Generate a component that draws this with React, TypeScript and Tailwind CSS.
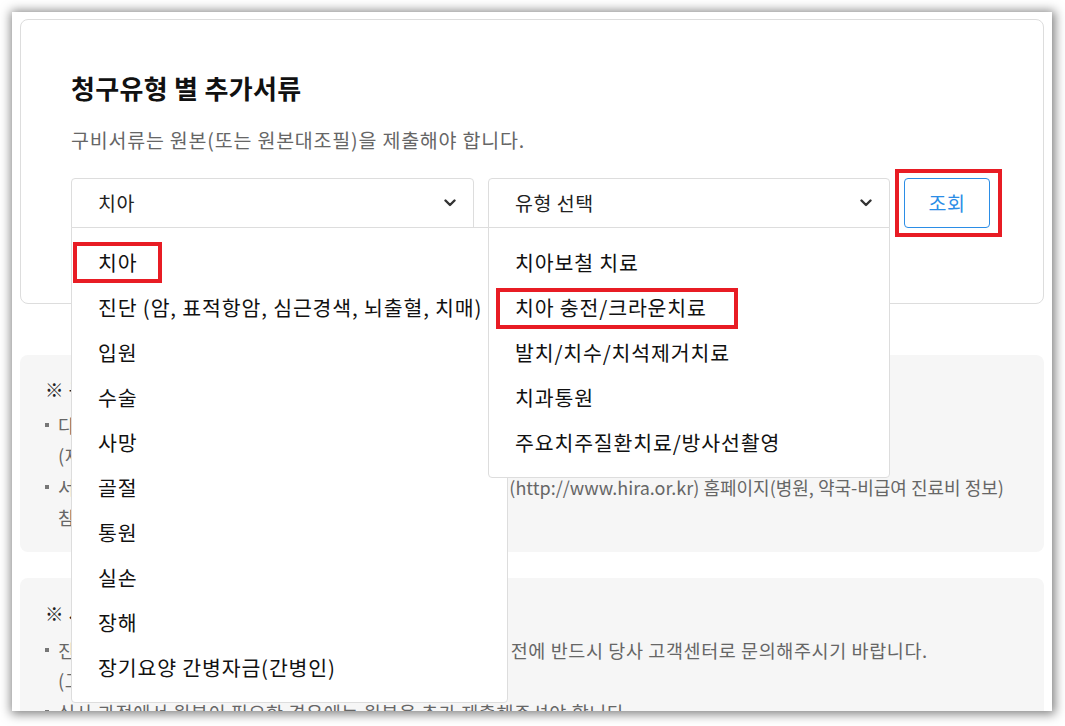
import React from "react";

const typeOptions = [
    "치아",
    "진단 (암, 표적항암, 심근경색, 뇌출혈, 치매)",
    "입원",
    "수술",
    "사망",
    "골절",
    "통원",
    "실손",
    "장해",
    "장기요양 간병자금(간병인)"
];

const detailOptions = [
    "치아보철 치료",
    "치아 충전/크라운치료",
    "발치/치수/치석제거치료",
    "치과통원",
    "주요치주질환치료/방사선촬영"
];

function Chevron() {
    return <svg width="12" height="8" viewBox="0 0 12 8" className="shrink-0">
        <path d="M1.5 1.5 L6 6 L10.5 1.5" fill="none" stroke="#333" strokeWidth="2.4" strokeLinecap="round" strokeLinejoin="round" />
    </svg>
}

function Bullet({ children }: { children: React.ReactNode }) {
    return <li className="flex">
        <span className="flex h-[30px] w-[13px] shrink-0 items-center">
            <span className="h-[4px] w-[4px] bg-[#777]" />
        </span>
        <span className="whitespace-nowrap">{children}</span>
    </li>
}

export default function App() {
    return <div className="h-[726px] w-[1065px] overflow-hidden bg-white pl-[12px] pt-[12px] font-['Noto_Sans_CJK_KR','Noto_Sans',sans-serif]">
        <div className="h-[699px] w-[1040px] overflow-hidden bg-white px-[8px] pt-[7px] shadow-[1px_1px_10px_2px_rgba(0,0,0,0.5)]">
            {/* search card */}
            <div className="rounded-[8px] border border-[#dddddd] px-[50px] pb-[75px] pt-[49px]">
                <h2 className="h-[38px] text-[26px] font-bold leading-[38px] tracking-[0.3px] text-[#111]">청구유형 별 추가서류</h2>
                <p className="mt-[19px] text-[19.5px] leading-[28px] tracking-[0.8px] text-[#666]">구비서류는 원본(또는 원본대조필)을 제출해야 합니다.</p>
                <div className="mt-[24px] flex gap-[14px]">
                    <div className="relative h-[50px] w-[403px]">
                        <div className="flex h-full items-center justify-between rounded-t-[4px] border border-[#dddddd] bg-white pl-[26px] pr-[17px] text-[19.5px] tracking-[0.5px] text-[#222]">
                            <span>치아</span>
                            <Chevron />
                        </div>
                        <ul className="absolute left-0 top-[49px] z-10 w-[437px] rounded-b-[4px] border border-[#dddddd] bg-white py-[12px]">
                            {typeOptions.map((o) => (
                                <li key={o} className="h-[45px] whitespace-nowrap pl-[26px] text-[20.5px] leading-[45px] tracking-[0.85px] text-[#111]">{o}</li>
                            ))}
                        </ul>
                        <span className="absolute left-[2px] top-[64px] z-30 h-[41px] w-[89px] border-4 border-[#e81c24]" />
                    </div>
                    <div className="relative h-[50px] w-[402px]">
                        <div className="flex h-full items-center justify-between rounded-t-[4px] border border-[#dddddd] bg-white pl-[26px] pr-[17px] text-[19.5px] tracking-[0.5px] text-[#222]">
                            <span>유형 선택</span>
                            <Chevron />
                        </div>
                        <ul className="absolute left-0 top-[49px] z-20 w-full rounded-b-[4px] border border-[#dddddd] bg-white py-[12px]">
                            {detailOptions.map((o) => (
                                <li key={o} className="h-[45px] whitespace-nowrap pl-[26px] text-[20.5px] leading-[45px] tracking-[0.85px] text-[#111]">{o}</li>
                            ))}
                        </ul>
                        <span className="absolute left-[8px] top-[110px] z-30 h-[41px] w-[242px] border-4 border-[#e81c24]" />
                    </div>
                    <div className="relative">
                        <button className="h-[50px] w-[86px] rounded-[4px] border border-[#2b8de6] bg-white text-[19.5px] tracking-[0.5px] text-[#2b8de6]">조회</button>
                        <span className="absolute left-[-9px] top-[-9px] h-[68px] w-[107px] border-4 border-[#e81c24]" />
                    </div>
                </div>
            </div>

            {/* notice 1 */}
            <div className="mt-[51px] rounded-[8px] bg-[#f6f6f6] pb-[20px] pl-[25px] pr-[20px] pt-[19px]">
                <p className="text-[18.5px] font-medium leading-[30px] tracking-[0.6px] text-[#222]">※ 구비서류 안내</p>
                <ul className="mt-[6px] flex flex-col gap-[2px] text-[18.5px] leading-[30px] tracking-[0.6px] text-[#666]">
                    <Bullet>다른 보험사에 제출한 서류는 사본으로 제출 가능합니다.<br />(재발급 시 발급비용은 고객 부담)</Bullet>
                    <Bullet>서류 발급 비용 관련 세부적인 사항은 건강보험심사평가원<span className="text-[18px] tracking-normal">(http://www.hira.or.kr) 홈페이지(병원, 약국-비급여 진료비 정보)</span><br />참고하시기 바랍니다.</Bullet>
                </ul>
            </div>

            {/* notice 2 */}
            <div className="mt-[26px] rounded-[8px] bg-[#f6f6f6] pb-[20px] pl-[25px] pr-[20px] pt-[20px]">
                <p className="text-[18.5px] font-medium leading-[30px] tracking-[0.6px] text-[#222]">※ 서류 제출 시 유의사항</p>
                <ul className="mt-[7px] flex flex-col gap-[2px] text-[18.5px] leading-[30px] tracking-[0.6px] text-[#666]">
                    <Bullet>진단서 등 서류 발급 시 추가 비용이 발생할 경우에는 발급 전에 반드시 당사 고객센터로 문의해주시기 바랍니다.<br />(고객센터 1588-0000)</Bullet>
                    <Bullet>심사 과정에서 원본이 필요한 경우에는 원본을 추가 제출해주셔야 합니다.</Bullet>
                </ul>
            </div>
        </div>
    </div>
}
